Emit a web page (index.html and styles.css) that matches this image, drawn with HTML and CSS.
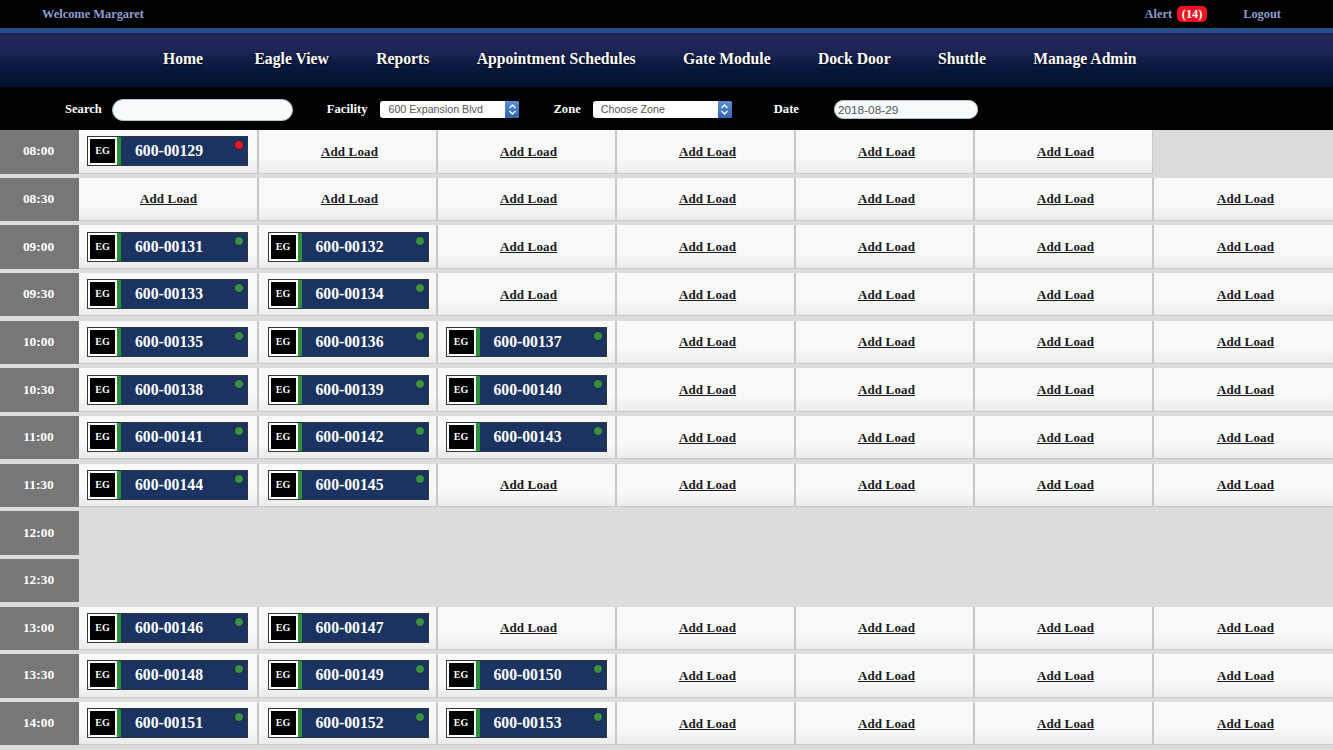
FILE: index.html
```html
<!DOCTYPE html>
<html lang="en">
<head>
<meta charset="utf-8">
<title>Eagle View</title>
<link rel="stylesheet" href="styles.css">
</head>
<body>
<header class="top">
  <span class="welcome">Welcome Margaret</span>
  <span class="alert">Alert</span><span class="badge">(14)</span>
  <a class="logout">Logout</a>
</header>
<nav class="nav">
  <a>Home</a><a>Eagle View</a><a>Reports</a><a>Appointment Schedules</a><a>Gate Module</a><a>Dock Door</a><a>Shuttle</a><a>Manage Admin</a>
</nav>
<form class="filters">
  <label class="lbl lbl-search">Search</label>
  <input class="search" type="text">
  <label class="lbl lbl-facility">Facility</label>
  <div class="select sel-fac"><span class="sel-text">600 Expansion Blvd</span><span class="sel-arrow"><svg width="9" height="13" viewBox="0 0 9 13"><path d="M1.5 5 4.5 2 7.5 5M1.5 8 4.5 11 7.5 8" fill="none" stroke="#fff" stroke-width="1.4"/></svg></span></div>
  <label class="lbl lbl-zone">Zone</label>
  <div class="select sel-zone"><span class="sel-text">Choose Zone</span><span class="sel-arrow"><svg width="9" height="13" viewBox="0 0 9 13"><path d="M1.5 5 4.5 2 7.5 5M1.5 8 4.5 11 7.5 8" fill="none" stroke="#fff" stroke-width="1.4"/></svg></span></div>
  <label class="lbl lbl-date">Date</label>
  <input class="date" type="text" value="2018-08-29">
</form>
<main class="board">
  <div class="row"><div class="time">08:00</div>
    <div class="cell"><div class="tag"><span class="eg">EG</span><span class="num">600-00129</span><i class="dot dot-red"></i></div></div>
    <div class="cell"><a class="add">Add Load</a></div><div class="cell"><a class="add">Add Load</a></div><div class="cell"><a class="add">Add Load</a></div><div class="cell"><a class="add">Add Load</a></div><div class="cell"><a class="add">Add Load</a></div>
    <div class="cell cell-empty"></div>
  </div>
  <div class="row"><div class="time">08:30</div>
    <div class="cell"><a class="add">Add Load</a></div><div class="cell"><a class="add">Add Load</a></div><div class="cell"><a class="add">Add Load</a></div><div class="cell"><a class="add">Add Load</a></div><div class="cell"><a class="add">Add Load</a></div><div class="cell"><a class="add">Add Load</a></div><div class="cell"><a class="add">Add Load</a></div>
  </div>
  <div class="row"><div class="time">09:00</div>
    <div class="cell"><div class="tag"><span class="eg">EG</span><span class="num">600-00131</span><i class="dot"></i></div></div>
    <div class="cell"><div class="tag"><span class="eg">EG</span><span class="num">600-00132</span><i class="dot"></i></div></div>
    <div class="cell"><a class="add">Add Load</a></div><div class="cell"><a class="add">Add Load</a></div><div class="cell"><a class="add">Add Load</a></div><div class="cell"><a class="add">Add Load</a></div><div class="cell"><a class="add">Add Load</a></div>
  </div>
  <div class="row"><div class="time">09:30</div>
    <div class="cell"><div class="tag"><span class="eg">EG</span><span class="num">600-00133</span><i class="dot"></i></div></div>
    <div class="cell"><div class="tag"><span class="eg">EG</span><span class="num">600-00134</span><i class="dot"></i></div></div>
    <div class="cell"><a class="add">Add Load</a></div><div class="cell"><a class="add">Add Load</a></div><div class="cell"><a class="add">Add Load</a></div><div class="cell"><a class="add">Add Load</a></div><div class="cell"><a class="add">Add Load</a></div>
  </div>
  <div class="row"><div class="time">10:00</div>
    <div class="cell"><div class="tag"><span class="eg">EG</span><span class="num">600-00135</span><i class="dot"></i></div></div>
    <div class="cell"><div class="tag"><span class="eg">EG</span><span class="num">600-00136</span><i class="dot"></i></div></div>
    <div class="cell"><div class="tag"><span class="eg">EG</span><span class="num">600-00137</span><i class="dot"></i></div></div>
    <div class="cell"><a class="add">Add Load</a></div><div class="cell"><a class="add">Add Load</a></div><div class="cell"><a class="add">Add Load</a></div><div class="cell"><a class="add">Add Load</a></div>
  </div>
  <div class="row"><div class="time">10:30</div>
    <div class="cell"><div class="tag"><span class="eg">EG</span><span class="num">600-00138</span><i class="dot"></i></div></div>
    <div class="cell"><div class="tag"><span class="eg">EG</span><span class="num">600-00139</span><i class="dot"></i></div></div>
    <div class="cell"><div class="tag"><span class="eg">EG</span><span class="num">600-00140</span><i class="dot"></i></div></div>
    <div class="cell"><a class="add">Add Load</a></div><div class="cell"><a class="add">Add Load</a></div><div class="cell"><a class="add">Add Load</a></div><div class="cell"><a class="add">Add Load</a></div>
  </div>
  <div class="row"><div class="time">11:00</div>
    <div class="cell"><div class="tag"><span class="eg">EG</span><span class="num">600-00141</span><i class="dot"></i></div></div>
    <div class="cell"><div class="tag"><span class="eg">EG</span><span class="num">600-00142</span><i class="dot"></i></div></div>
    <div class="cell"><div class="tag"><span class="eg">EG</span><span class="num">600-00143</span><i class="dot"></i></div></div>
    <div class="cell"><a class="add">Add Load</a></div><div class="cell"><a class="add">Add Load</a></div><div class="cell"><a class="add">Add Load</a></div><div class="cell"><a class="add">Add Load</a></div>
  </div>
  <div class="row"><div class="time">11:30</div>
    <div class="cell"><div class="tag"><span class="eg">EG</span><span class="num">600-00144</span><i class="dot"></i></div></div>
    <div class="cell"><div class="tag"><span class="eg">EG</span><span class="num">600-00145</span><i class="dot"></i></div></div>
    <div class="cell"><a class="add">Add Load</a></div><div class="cell"><a class="add">Add Load</a></div><div class="cell"><a class="add">Add Load</a></div><div class="cell"><a class="add">Add Load</a></div><div class="cell"><a class="add">Add Load</a></div>
  </div>
  <div class="row"><div class="time">12:00</div></div>
  <div class="row"><div class="time">12:30</div></div>
  <div class="row"><div class="time">13:00</div>
    <div class="cell"><div class="tag"><span class="eg">EG</span><span class="num">600-00146</span><i class="dot"></i></div></div>
    <div class="cell"><div class="tag"><span class="eg">EG</span><span class="num">600-00147</span><i class="dot"></i></div></div>
    <div class="cell"><a class="add">Add Load</a></div><div class="cell"><a class="add">Add Load</a></div><div class="cell"><a class="add">Add Load</a></div><div class="cell"><a class="add">Add Load</a></div><div class="cell"><a class="add">Add Load</a></div>
  </div>
  <div class="row"><div class="time">13:30</div>
    <div class="cell"><div class="tag"><span class="eg">EG</span><span class="num">600-00148</span><i class="dot"></i></div></div>
    <div class="cell"><div class="tag"><span class="eg">EG</span><span class="num">600-00149</span><i class="dot"></i></div></div>
    <div class="cell"><div class="tag"><span class="eg">EG</span><span class="num">600-00150</span><i class="dot"></i></div></div>
    <div class="cell"><a class="add">Add Load</a></div><div class="cell"><a class="add">Add Load</a></div><div class="cell"><a class="add">Add Load</a></div><div class="cell"><a class="add">Add Load</a></div>
  </div>
  <div class="row"><div class="time">14:00</div>
    <div class="cell"><div class="tag"><span class="eg">EG</span><span class="num">600-00151</span><i class="dot"></i></div></div>
    <div class="cell"><div class="tag"><span class="eg">EG</span><span class="num">600-00152</span><i class="dot"></i></div></div>
    <div class="cell"><div class="tag"><span class="eg">EG</span><span class="num">600-00153</span><i class="dot"></i></div></div>
    <div class="cell"><a class="add">Add Load</a></div><div class="cell"><a class="add">Add Load</a></div><div class="cell"><a class="add">Add Load</a></div><div class="cell"><a class="add">Add Load</a></div>
  </div>
</main>
</body>
</html>
```
FILE: styles.css
```css
* { box-sizing: border-box; }
html, body { margin: 0; height: 750px; overflow: hidden; }
body {
  background: #dcdcdc;
  font-family: "Liberation Serif", "Times New Roman", serif;
  font-weight: bold;
  color: #fff;
}
.top {
  height: 28px;
  background: #000;
  display: flex;
  align-items: center;
  padding-left: 42px;
  font-size: 12.4px;
  color: #8d9fd2;
}
.welcome { margin-right: auto; }
.alert { margin-right: 5px; }
.badge {
  background: #ee1122;
  color: #fff;
  border-radius: 5px;
  width: 30px;
  height: 16px;
  line-height: 16px;
  text-align: center;
}
.logout { margin-left: 36px; margin-right: 52px; }
.nav {
  height: 59px;
  border-top: 5px solid #23508a;
  background: linear-gradient(#202357 0, #1e2556 30%, #04173a 70%, #03122c 100%);
  display: flex;
  align-items: center;
  padding: 0 0 3px 163px;
  gap: 47.3px;
  font-size: 15.7px;
  text-shadow: 0 1px 2px #000;
}
.nav a:first-child { margin-right: 4px; }
.filters {
  height: 43px;
  padding-top: 2px;
  background: #000;
  display: flex;
  align-items: center;
}
.lbl { font-size: 12.6px; }
.lbl-search { margin-left: 65px; }
.search {
  width: 181px;
  height: 22px;
  margin-left: 10px;
  border: 1px solid #a9c8cc;
  border-radius: 11px;
  background: #f7fafa;
}
.lbl-facility { margin-left: 34px; }
.select {
  display: flex;
  width: 139px;
  height: 17px;
  margin-left: 12px;
  background: #fff;
  border-radius: 3px;
  overflow: hidden;
  font-family: "Liberation Sans", Arial, sans-serif;
  font-weight: normal;
  font-size: 10.7px;
  color: #555;
  line-height: 17px;
}
.sel-fac { margin-left: 13px; }
.sel-text { flex: 1; padding-left: 8px; white-space: nowrap; }
.sel-arrow {
  width: 14px;
  background: linear-gradient(#5b8fd6, #2f66b0);
  display: flex;
  align-items: center;
  justify-content: center;
}
.lbl-zone { margin-left: 34px; }
.lbl-date { margin-left: 42px; }
.date {
  width: 144px;
  height: 19px;
  margin-left: 35px;
  padding: 0 3px;
  border: 1px solid #a9c8cc;
  border-radius: 9px;
  background: #f7fafa;
  font-family: "Liberation Sans", Arial, sans-serif;
  font-size: 11.8px;
  color: #555;
}
.board {
  display: flex;
  flex-direction: column;
  gap: 4.17px;
}
.row {
  display: flex;
  height: 43.5px;
}
.time {
  flex: 0 0 79px;
  background: #777;
  font-size: 13.4px;
  display: flex;
  align-items: center;
  justify-content: center;
  padding: 0 2px 1px 0;
}
.cell {
  flex: 0 0 179px;
  min-width: 0;
  display: flex;
  align-items: center;
  justify-content: center;
  background: linear-gradient(#f8f9f9 0, #f8f9f9 65%, #ebebeb 100%);
  border-left: 1px solid #c8c8c8;
  border-right: 1px solid #c8c8c8;
  border-bottom: 1px solid #cbcbcb;
}
.time + .cell { border-left: 0; }
.cell:last-child { flex: 1 1 0; border-right: 0; }
.cell-empty { background: transparent; border: 0; }
.add {
  margin: 1px 0 0 4px;
  color: #1a1a1a;
  font-size: 13px;
  letter-spacing: 0.15px;
  text-decoration: underline;
}
.time + .cell .add { margin-left: 1px; }
.tag {
  position: relative;
  width: 161px;
  height: 30px;
  margin-right: 1px;
  display: flex;
  align-items: center;
  background: #1a3360;
  border: 1px solid #30363f;
}
.time + .cell + .cell .tag { margin-left: 2px; }
.eg {
  width: 29px;
  height: 28px;
  background: #000;
  border: 2px solid #fff;
  color: #fff;
  font-size: 10px;
  line-height: 24px;
  text-align: center;
}
.num {
  padding-left: 14px;
  border-left: 4px solid #2a8f35;
  height: 28px;
  line-height: 28px;
  font-size: 15.7px;
  color: #fff;
}
.dot {
  position: absolute;
  top: 3px;
  right: 3px;
  width: 10px;
  height: 10px;
  border-radius: 50%;
  background: #3a9045;
  border: 1px solid #1a2a40;
}
.dot-red { background: #ee1122; }
```
